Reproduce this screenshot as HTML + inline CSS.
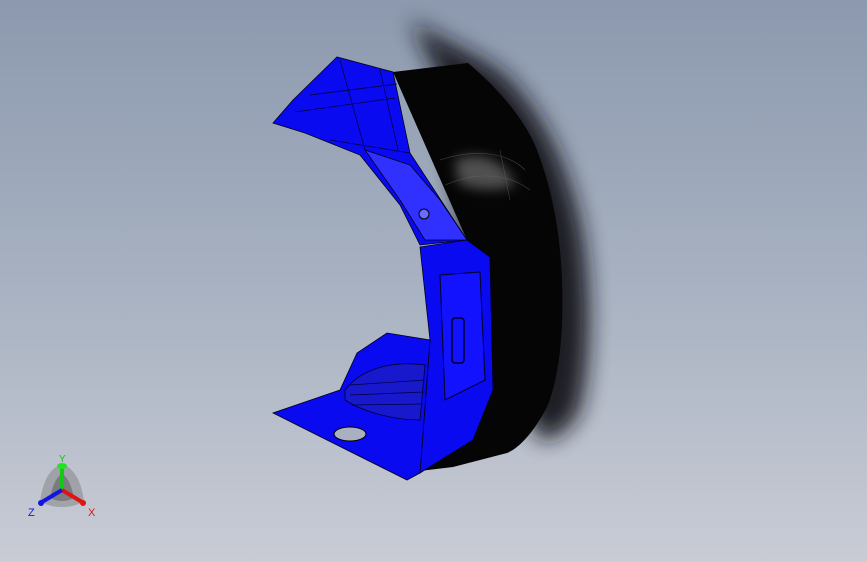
<!DOCTYPE html>
<html><head><style>
html,body{margin:0;padding:0;width:867px;height:562px;overflow:hidden}
body{background:linear-gradient(180deg,#8c99ae 0%,#a7b1c1 50%,#c9ccd5 100%);font-family:"Liberation Sans",sans-serif}
</style></head><body>
<svg width="867" height="562" viewBox="0 0 867 562" style="position:absolute;left:0;top:0">
<defs>
<filter id="b" x="-50%" y="-50%" width="200%" height="200%"><feGaussianBlur stdDeviation="11"/></filter>
<filter id="b2" x="-50%" y="-50%" width="200%" height="200%"><feGaussianBlur stdDeviation="6"/></filter>
</defs>
<!-- shadow -->
<path d="M410,20 C440,40 480,55 505,75 C545,115 570,170 582,230 C592,290 592,360 580,410 C570,430 555,440 540,440 L470,300 L440,80 Z" fill="#15181f" filter="url(#b)" opacity="0.95"/>
<!-- black shell -->
<path d="M393,72 L468,63 C500,90 525,120 537,150 C552,190 560,230 562,280 C564,340 558,380 547,407 C535,430 520,448 507,453 L453,467 L403,473 L420,420 L460,300 L467,240 Z" fill="#050505"/>
<path d="M455,160 C480,150 505,160 515,185 C495,192 470,190 458,182Z" fill="#bfbfbf" filter="url(#b2)" opacity="0.4"/>
<path d="M440,160 C470,150 505,150 525,170 M445,185 C480,170 510,175 530,190 M500,150 L510,200" stroke="#666" stroke-width="0.6" fill="none" opacity="0.6"/>
<!-- blue upper wing -->
<path d="M273,123 L293,100 L337,57 L393,72 L410,153 L467,240 L420,245 L400,205 L360,155 L305,133 Z" fill="#0a0af0" stroke="#000018" stroke-width="0.8"/>
<path d="M295,112 L395,98 M310,95 L397,84 M330,140 L410,153 M340,60 L365,150 M380,70 L398,150" stroke="#000030" stroke-width="0.7" fill="none"/>
<path d="M365,150 L410,165 L440,200 L467,240 L425,240 L400,200 Z" fill="#3030ff" stroke="#000020" stroke-width="0.8"/>
<circle cx="424" cy="214" r="5" fill="#6b6bff" stroke="#000" stroke-width="1"/>
<!-- blue column -->
<path d="M420,247 L467,240 L490,257 L493,390 L473,440 L420,473 L430,340 Z" fill="#0a0af0" stroke="#000018" stroke-width="0.8"/>
<path d="M440,275 L480,272 L485,380 L445,400 Z" fill="#1212ff" stroke="#000020" stroke-width="1"/>
<rect x="452" y="318" width="12" height="45" rx="3" fill="none" stroke="#000030" stroke-width="1.5"/>
<!-- lower fan -->
<path d="M387,333 L430,340 L420,473 L407,480 L393,473 L313,433 L273,413 L340,390 L357,353 Z" fill="#0a0af0" stroke="#000018" stroke-width="0.8"/>
<path d="M345,390 C360,370 390,360 425,365 L420,420 C390,420 360,410 345,400Z" fill="#1818cc" stroke="#000030" stroke-width="0.8"/>
<path d="M350,385 L425,380 M350,395 L425,392 M352,405 L423,404" stroke="#000040" stroke-width="0.7"/>
<ellipse cx="350" cy="434" rx="16" ry="7" fill="#a9b1c0" stroke="#000" stroke-width="1"/>
<!-- triad -->
<g transform="translate(62,490)">
<path d="M-22,12 Q-18,-20 0,-26 Q18,-20 22,12 Q0,22 -22,12Z" fill="#777" opacity="0.45"/>
<path d="M-12,8 Q-8,-12 0,-16 Q8,-12 12,8 Q0,14 -12,8Z" fill="#444" opacity="0.4"/>
<line x1="0" y1="0" x2="0" y2="-22" stroke="#14c814" stroke-width="4"/>
<ellipse cx="0" cy="-24" rx="5" ry="3" fill="#1ee61e"/>
<line x1="0" y1="0" x2="20" y2="12" stroke="#e01414" stroke-width="4"/>
<line x1="0" y1="0" x2="-20" y2="12" stroke="#1414e0" stroke-width="4"/>
<circle cx="21" cy="13" r="3" fill="#e01414"/><circle cx="-21" cy="13" r="3" fill="#1414e0"/>
<text x="-3" y="-28" font-size="10" fill="#18c018" font-family="Liberation Sans">Y</text>
<text x="26" y="26" font-size="11" fill="#e01414" font-family="Liberation Sans">X</text>
<text x="-34" y="26" font-size="11" fill="#1414e0" font-family="Liberation Sans">Z</text>
</g>
</svg>
</body></html>
